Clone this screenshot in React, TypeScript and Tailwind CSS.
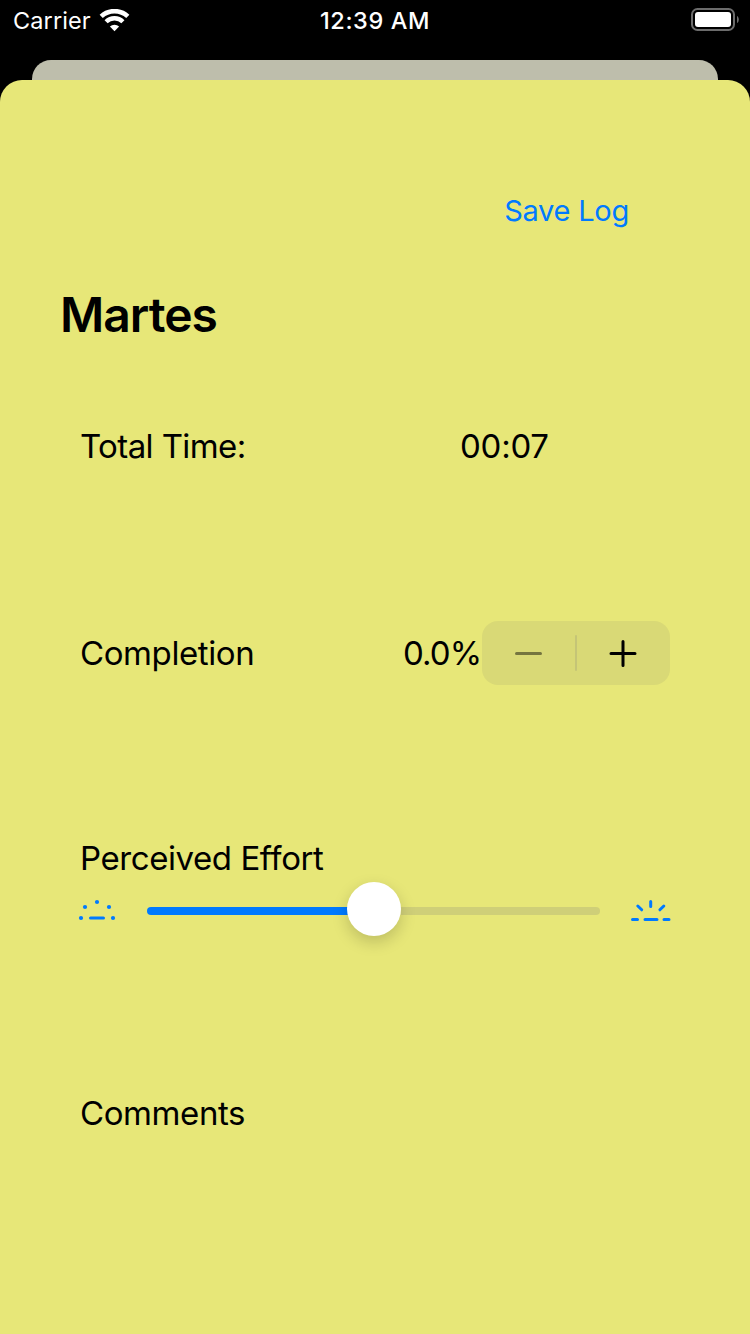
import React from "react";

function StatusBar() {
  return (
    <header className="grid h-[60px] grid-cols-3 items-start text-white">
      <div className="flex h-[42px] items-center pl-[13px]">
        <span className="w-[78px] whitespace-nowrap text-[23.5px] leading-[42px] tracking-[0.1px]">Carrier</span>
        <svg className="mb-px ml-[8px]" width="31" height="23" viewBox="0 0 31 23" fill="none" stroke="#fff">
          <path d="M2.2 7.4 A19.4 19.4 0 0 1 28.8 7.4" strokeWidth="4.6" />
          <path d="M7.1 12.7 A12 12 0 0 1 23.9 12.7" strokeWidth="4.4" />
          <path d="M15.5 22.3 L10.9 17.5 A6.6 6.6 0 0 1 20.1 17.5 Z" fill="#fff" stroke="none" />
        </svg>
      </div>
      <div className="flex h-[42px] items-center justify-center">
        <span className="text-[23.5px] font-medium leading-[42px] tracking-[0.6px]">12:39 AM</span>
      </div>
      <div className="flex h-10 items-center justify-end pr-[11px]">
        <svg width="48" height="24" viewBox="0 0 48 24">
          <rect x="1" y="1" width="42" height="21" rx="5.5" fill="none" stroke="#6c6c6c" strokeWidth="2" />
          <rect x="4" y="4" width="36" height="15" rx="3" fill="#fff" />
          <path d="M46 8 C48.4 9 48.4 14 46 15 Z" fill="#6c6c6c" />
        </svg>
      </div>
    </header>
  );
}

function Stepper() {
  return (
    <div className="flex h-16 w-[188px] items-center rounded-[16px] bg-[#d9d976]">
      <button className="flex h-full w-[93px] items-center justify-center" aria-label="Decrement">
        <span className="h-[3px] w-[27px] rounded-full bg-[#75753f]" />
      </button>
      <span className="h-9 w-[2px] rounded-full bg-[#c5c576]" />
      <button className="flex h-full w-[93px] items-center justify-center pr-[2px]" aria-label="Increment">
        <svg width="28" height="28" viewBox="0 0 28 28" stroke="#000" strokeWidth="3" strokeLinecap="round">
          <path d="M2 14.5H26M14 2.5V26.5" />
        </svg>
      </button>
    </div>
  );
}

function LightMin() {
  return (
    <svg width="38" height="24" viewBox="0 0 38 24" fill="#007aff">
      <circle cx="19" cy="4" r="2.1" />
      <circle cx="7" cy="9" r="2.1" />
      <circle cx="31" cy="9" r="2.1" />
      <circle cx="3" cy="20" r="2.1" />
      <circle cx="35" cy="20" r="2.1" />
      <rect x="11" y="18.5" width="16" height="3" rx="1.5" />
    </svg>
  );
}

function LightMax() {
  return (
    <svg width="40" height="24" viewBox="0 0 40 24" stroke="#007aff" strokeWidth="3" strokeLinecap="round">
      <path d="M1.5 21.5H6.5M14 21.5H26M33 21.5H38M19.7 3.5V8.5M6.8 8L10.7 11.8M32.8 8L28.9 11.8" />
    </svg>
  );
}

export default function App() {
  return (
    <div className="flex h-[1334px] w-[750px] flex-col bg-black font-['Inter',sans-serif] text-black">
      <StatusBar />
      <div className="mx-8 h-5 shrink-0 rounded-t-[19px] bg-[#bebeac]" />
      <main className="flex-1 rounded-t-[22px] bg-[#e7e778] text-[33px] leading-10">
        <div className="flex h-[155px] items-end justify-end pr-[121px] pb-1">
          <button className="text-[29px] leading-10 tracking-[-0.25px] text-[#007aff]">Save Log</button>
        </div>
        <h1 className="mt-[50px] h-[59px] pl-[60px] text-[48px] font-semibold leading-[60px] tracking-[-1px]">Martes</h1>
        <div className="mt-[82px] flex h-10 pl-20">
          <span className="w-[380px] tracking-[-0.6px]">Total Time:</span>
          <span className="tracking-[-0.25px]">00:07</span>
        </div>
        <div className="mt-[155px] flex h-16 items-center pl-20">
          <span className="w-[323px] tracking-[-0.4px]">Completion</span>
          <span className="w-[79px] tracking-[-0.9px]">0.0%</span>
          <Stepper />
        </div>
        <div className="mt-[153px] pl-20 tracking-[-0.43px]">Perceived Effort</div>
        <div className="flex h-[62px] items-start pt-[4px] pl-[78px]">
          <div className="pt-[16px]"><LightMin /></div>
          <div className="ml-[31px] flex h-[54px] w-[453px] items-center">
            <span className="mt-1 h-2 w-[204px] rounded-l-full bg-[#007aff]" />
            <span className="z-10 -ml-1 size-[54px] shrink-0 rounded-full bg-white shadow-[0_6px_16px_rgba(0,0,0,0.18)]" />
            <span className="mt-1 h-2 flex-1 rounded-r-full bg-[#cfcf78]" />
          </div>
          <div className="ml-[31px] pt-[16px]"><LightMax /></div>
        </div>
        <div className="mt-[153px] pl-20 tracking-[-0.4px]">Comments</div>
      </main>
    </div>
  );
}
